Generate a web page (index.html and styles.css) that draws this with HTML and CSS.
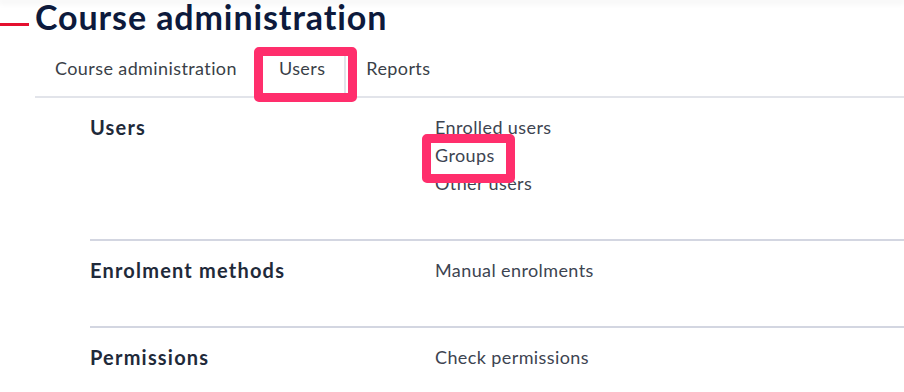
FILE: index.html
```html
<!DOCTYPE html>
<html lang="en">
<head>
<meta charset="utf-8">
<title>Course administration</title>
<link rel="stylesheet" href="styles.css">
</head>
<body>
<div class="topbar"></div>

<div class="page-header">
<span class="accent"></span>
<h1>Course administration</h1>
</div>

<div class="tabs">
<a href="#" class="tab">Course administration</a>
<a href="#" class="tab active mark">Users</a>
<a href="#" class="tab">Reports</a>
</div>

<div class="sections">
<div class="row">
<h3>Users</h3>
<ul>
<li><a href="#">Enrolled users</a></li>
<li><a href="#" class="mark">Groups</a></li>
<li><a href="#">Other users</a></li>
</ul>
</div>
<div class="row">
<h3>Enrolment methods</h3>
<ul>
<li><a href="#">Manual enrolments</a></li>
</ul>
</div>
<div class="row">
<h3>Permissions</h3>
<ul>
<li><a href="#">Check permissions</a></li>
</ul>
</div>
</div>
</body>
</html>
```

FILE: styles.css
```css
*, *::before, *::after {
margin: 0;
padding: 0;
box-sizing: border-box;
}

body {
background-color: #fff;
font-family: Lato, "Liberation Sans", sans-serif;
overflow: hidden;
}

a {
text-decoration: none;
}

.topbar {
height: 0;
box-shadow: 0 1px 6px 2px rgba(0, 0, 0, 0.06);
}

.page-header {
display: flex;
align-items: flex-start;
}

.accent {
width: 29px;
height: 3px;
margin-top: 23px;
margin-right: 6px;
background-color: #e4102f;
}

.page-header h1 {
font-size: 34px;
line-height: 34px;
font-weight: 700;
letter-spacing: 0.9px;
color: #0d1a3c;
}

.tabs {
display: flex;
margin: 14px 0 0 35px;
border-bottom: 2px solid #e2e4ea;
}

.tab {
position: relative;
display: block;
padding: 4px 20px 14px;
font-size: 18px;
line-height: 28px;
letter-spacing: 0.4px;
color: #3a3f48;
border-top: 2px solid transparent;
}

.tab.active {
background-color: #fff;
border: 2px solid #e2e4ea;
border-bottom: none;
padding: 4px 19px 16px 20px;
margin-bottom: -2px;
}

/* pink highlight frames */
.mark::after {
content: "";
position: absolute;
border: 9px solid #ff2e6c;
border-radius: 5px;
}

.tab.mark::after {
left: -5px;
width: 103px;
top: -3px;
bottom: -4px;
}

.row ul .mark {
position: relative;
display: inline-block;
}

.row ul .mark::after {
left: -13px;
width: 93px;
top: -7px;
bottom: -14px;
}

.sections {
margin-left: 90px;
}

.row {
display: grid;
grid-template-columns: 345px 1fr;
padding: 15px 0 42px;
}

.row + .row {
border-top: 2px solid #d3d6e1;
}

.row h3 {
font-size: 20px;
line-height: 28px;
font-weight: 700;
letter-spacing: 1.2px;
color: #1f2a3a;
}

.row ul {
list-style: none;
}

.row li {
font-size: 18px;
line-height: 28px;
letter-spacing: 0.4px;
}

.row li a {
color: #3d4451;
}
```
